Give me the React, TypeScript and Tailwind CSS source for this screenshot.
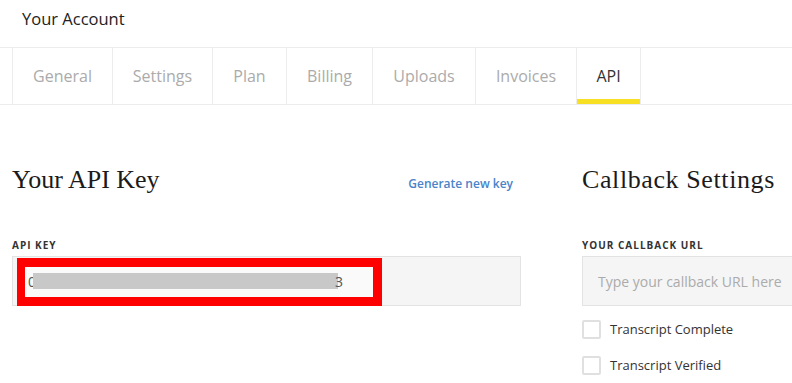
import React from "react";

const tabs: { label: string; w: string; active?: boolean }[] = [
  { label: "General", w: "w-[100px]" },
  { label: "Settings", w: "w-[100px]" },
  { label: "Plan", w: "w-[74px]" },
  { label: "Billing", w: "w-[86px]" },
  { label: "Uploads", w: "w-[103px]" },
  { label: "Invoices", w: "w-[101px]" },
  { label: "API", w: "w-[65px]", active: true },
];

export default function App() {
  return (
    <div className="w-[792px] h-[383px] overflow-hidden bg-white font-['Open_Sans','Liberation_Sans',sans-serif] text-[#333]">
      <div className="h-[47px] pl-[22px] pt-[8px] text-[16.5px] leading-[22px] text-[#222]">
        Your Account
      </div>

      <div className="flex h-[58px] border-y border-[#ececec] pl-[12px]">
        {tabs.map((t) => (
          <div
            key={t.label}
            className={
              "relative flex items-center justify-center border-l border-[#ececec] text-[16px] " +
              t.w +
              (t.active ? " border-r text-[#333]" : " text-[#ababab]")
            }
          >
            {t.label}
            {t.active && (
              <div className="absolute bottom-0 left-0 right-0 h-[5px] bg-[#f7e024]" />
            )}
          </div>
        ))}
      </div>

      <div className="flex gap-[61px] px-[12px] pt-[59px]">
        <div className="w-[509px] shrink-0">
          <div className="flex items-baseline justify-between pr-[8px]">
            <h2 className="font-['Liberation_Serif',serif] text-[26px] leading-[32px] text-[#1b1b1b]">
              Your API Key
            </h2>
            <a className="text-[12px] font-semibold text-[#4a84c9]">Generate new key</a>
          </div>
          <div className="mt-[42px] mb-[4px] text-[10px] font-bold leading-[14px] tracking-[1px] text-[#333]">
            API KEY
          </div>
          <div className="relative flex h-[50px] items-center border border-[#e3e3e3] bg-[#f5f5f5] pl-[15px] text-[14px] text-[#555]">
            <div className="absolute left-[4px] top-[1px] h-[48px] w-[365px] border-[9px] border-l-[8px] border-[#ff0000] bg-[#fafafa]" />
            <div className="relative flex items-center">
              <span>0</span>
              <span className="ml-[-3px] inline-block h-[16px] w-[305px] bg-[#c8c8c8]" />
              <span className="ml-[-3px]">3</span>
            </div>
          </div>
        </div>

        <div className="w-[509px] shrink-0">
          <h2 className="font-['Liberation_Serif',serif] text-[26px] leading-[32px] tracking-[0.6px] text-[#1b1b1b]">
            Callback Settings
          </h2>
          <div className="mt-[42px] mb-[4px] text-[10px] font-bold leading-[14px] tracking-[1px] text-[#333]">
            YOUR CALLBACK URL
          </div>
          <input
            className="block h-[50px] w-full border border-[#e3e3e3] bg-[#f5f5f5] pl-[15px] text-[14px] outline-none placeholder:text-[#ababab]"
            placeholder="Type your callback URL here"
          />
          <div className="mt-[14px] flex flex-col gap-[17px]">
            {["Transcript Complete", "Transcript Verified"].map((l) => (
              <label key={l} className="flex h-[19px] items-center gap-[9px] text-[13px] text-[#333]">
                <span className="inline-block h-[19px] w-[19px] rounded-[2px] border-2 border-[#e0e0e0] bg-white" />
                {l}
              </label>
            ))}
          </div>
        </div>
      </div>
    </div>
  );
}
